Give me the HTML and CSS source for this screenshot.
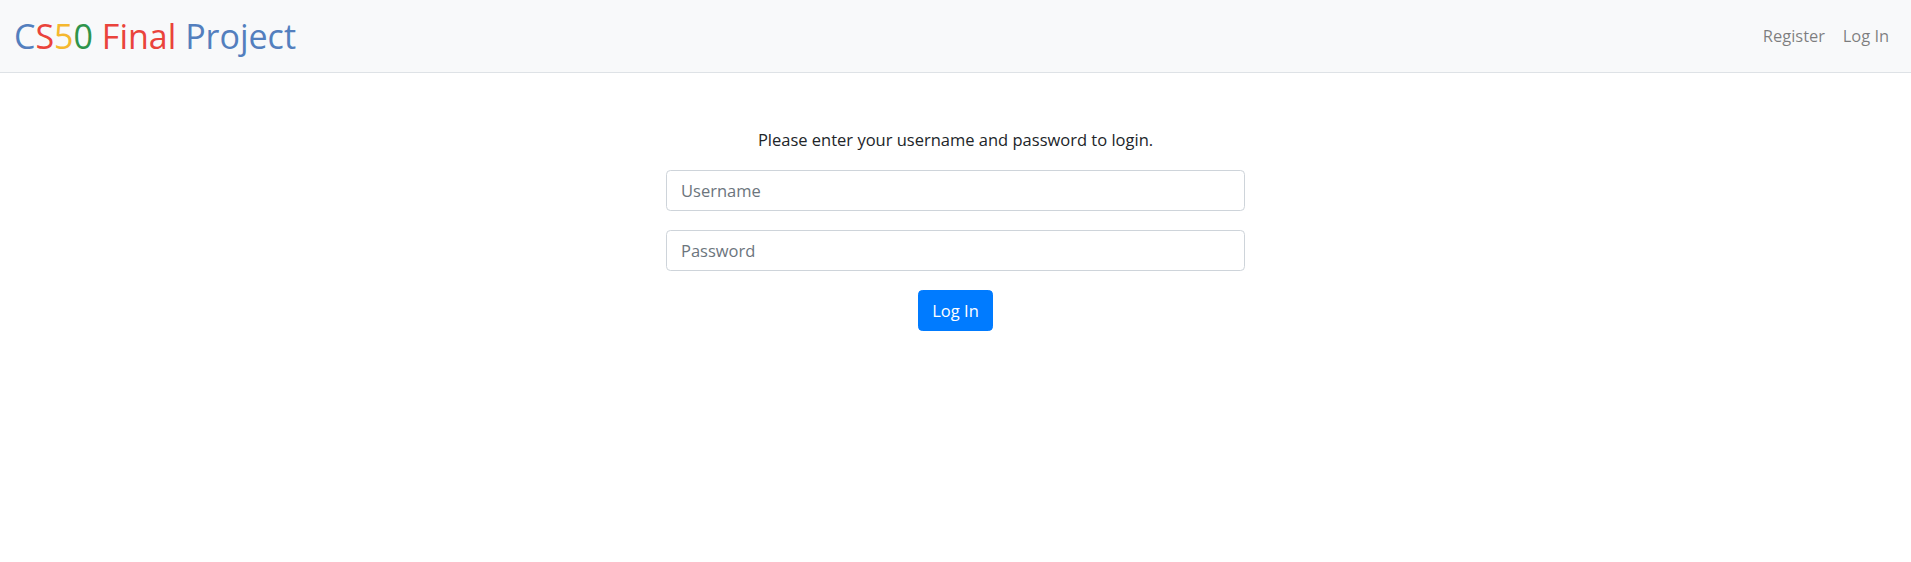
FILE: index.html
```html
<!DOCTYPE html>
<html lang="en">
<head>
<meta charset="utf-8">
<title>CS50 Final Project: Log In</title>
<link rel="stylesheet" href="styles.css">
</head>
<body>
<nav class="navbar">
  <a class="brand" href="#"><span class="blue">C</span><span class="red">S</span><span class="yellow">5</span><span class="green">0</span> <span class="red">Final</span> <span class="blue">Project</span></a>
  <ul class="nav-links">
    <li><a class="nav-link" href="#">Register</a></li>
    <li><a class="nav-link" href="#">Log In</a></li>
  </ul>
</nav>
<main class="main">
  <p class="intro">Please enter your username and password to login.</p>
  <form class="login-form">
    <div class="form-group"><input class="form-control" type="text" placeholder="Username" autocomplete="off"></div>
    <div class="form-group"><input class="form-control" type="password" placeholder="Password"></div>
    <button class="btn-primary" type="submit">Log In</button>
  </form>
</main>
</body>
</html>
```
FILE: styles.css
```css
* { box-sizing: border-box; }
body {
  margin: 0;
  font-family: "Open Sans", "Noto Sans", sans-serif;
  font-size: 17.6px;
  line-height: 1.5;
  color: #212529;
  background: #fff;
}
.navbar {
  height: 73px;
  background: #f8f9fa;
  border-bottom: 1px solid #dee2e6;
  display: flex;
  align-items: center;
  justify-content: space-between;
  padding: 0 13px 0 14px;
}
.brand {
  font-size: 34px;
  text-decoration: none;
  line-height: 1;
}
.blue { color: #537fbe; }
.red { color: #ea433b; }
.yellow { color: #f5b82e; }
.green { color: #2e944b; }
.nav-links {
  list-style: none;
  margin: 0;
  padding: 0;
  display: flex;
}
.nav-link {
  display: block;
  padding: 0 8.8px;
  color: rgba(0, 0, 0, 0.5);
  text-decoration: none;
  font-size: 16.5px;
}
.main {
  text-align: center;
  padding-top: 55px;
}
.intro {
  margin: 0 0 17px;
  font-size: 16.5px;
}
.login-form {
  display: flex;
  flex-direction: column;
  align-items: center;
}
.form-group { margin-bottom: 19px; }
.form-control {
  display: block;
  width: 579px;
  height: 41px;
  padding: 6px 14px;
  font-family: inherit;
  font-size: 16.5px;
  color: #495057;
  border: 1px solid #ced4da;
  border-radius: 4.4px;
  background: #fff;
}
.form-control::placeholder { color: #6c757d; }
.btn-primary {
  height: 41px;
  padding: 0 13px;
  font-family: inherit;
  font-size: 16.5px;
  color: #fff;
  background: #007bff;
  border: 1px solid #007bff;
  border-radius: 4.4px;
  margin-top: 0;
}
```
